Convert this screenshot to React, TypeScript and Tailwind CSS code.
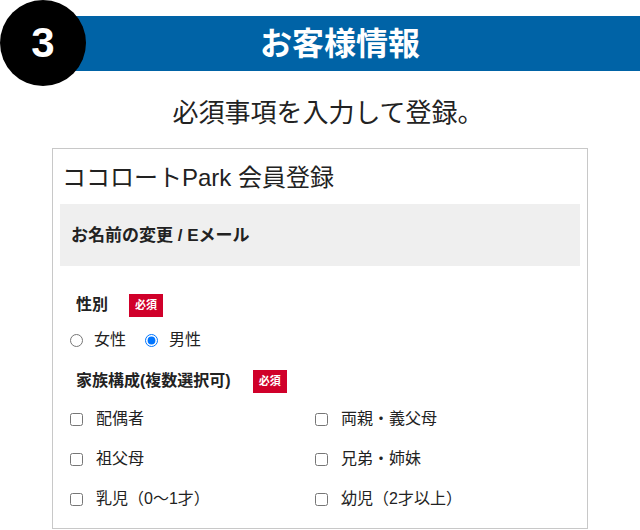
import React from "react";

const FONT = {
  fontFamily: '"Liberation Sans", "Noto Sans CJK JP", sans-serif',
};

function Required() {
  return (
    <span className="inline-flex h-[23px] w-[34px] items-center justify-center bg-[#d0002a] text-[11px] font-bold leading-none text-white">
      必須
    </span>
  );
}

const family = [
  "配偶者",
  "両親・義父母",
  "祖父母",
  "兄弟・姉妹",
  "乳児（0〜1才）",
  "幼児（2才以上）",
];

export default function App() {
  return (
    <div className="h-[530px] w-[640px] overflow-hidden bg-white text-[#222]" style={FONT}>
      <div className="relative pl-[40px] pt-[16px]">
        <div className="flex h-[55px] items-center justify-center bg-[#0063a6]">
          <h1 className="text-[32px] font-bold leading-none text-white">お客様情報</h1>
        </div>
        <div className="absolute left-0 top-0 flex h-[86px] w-[86px] items-center justify-center rounded-full bg-black">
          <span className="text-[42px] font-bold leading-none text-white">3</span>
        </div>
      </div>

      <p className="mt-[26px] pl-[16px] text-center text-[26px] font-normal leading-[32px] text-[#222]">
        必須事項を入力して登録。
      </p>

      <div className="mx-auto mt-[19px] h-[381px] w-[536px] border border-[#c8c8c8] px-[7px]">
        <h2 className="pl-[2px] pt-[13px] text-[24px] font-normal leading-[32px] text-[#222]">
          ココロートPark 会員登録
        </h2>
        <div className="mt-[10px] flex h-[62px] items-center bg-[#efefef] px-[11px]">
          <span className="pt-[2px] text-[17px] font-bold text-[#222]">お名前の変更 / Eメール</span>
        </div>

        <div className="mt-[27px] flex items-center gap-[21px] pl-[16px]">
          <span className="text-[16px] font-bold">性別</span>
          <Required />
        </div>

        <div className="mt-[11px] flex h-[24px] items-center pl-[10px] text-[16px]">
          <label className="flex items-center gap-[11px]">
            <input type="radio" name="sex" className="m-0 h-[13px] w-[13px]" />
            女性
          </label>
          <label className="ml-[19px] flex items-center gap-[11px]">
            <input type="radio" name="sex" defaultChecked className="m-0 h-[13px] w-[13px]" />
            男性
          </label>
        </div>

        <div className="mt-[17px] flex items-center gap-[22px] pl-[16px]">
          <span className="text-[16px] font-bold">家族構成(複数選択可)</span>
          <Required />
        </div>

        <div className="mt-[14px] grid grid-cols-[245px_245px] gap-y-[16px] pl-[10px] text-[16px]">
          {family.map((f) => (
            <label key={f} className="flex h-[24px] items-center gap-[13px]">
              <input type="checkbox" className="m-0 h-[13px] w-[13px]" />
              {f}
            </label>
          ))}
        </div>
      </div>
    </div>
  );
}
